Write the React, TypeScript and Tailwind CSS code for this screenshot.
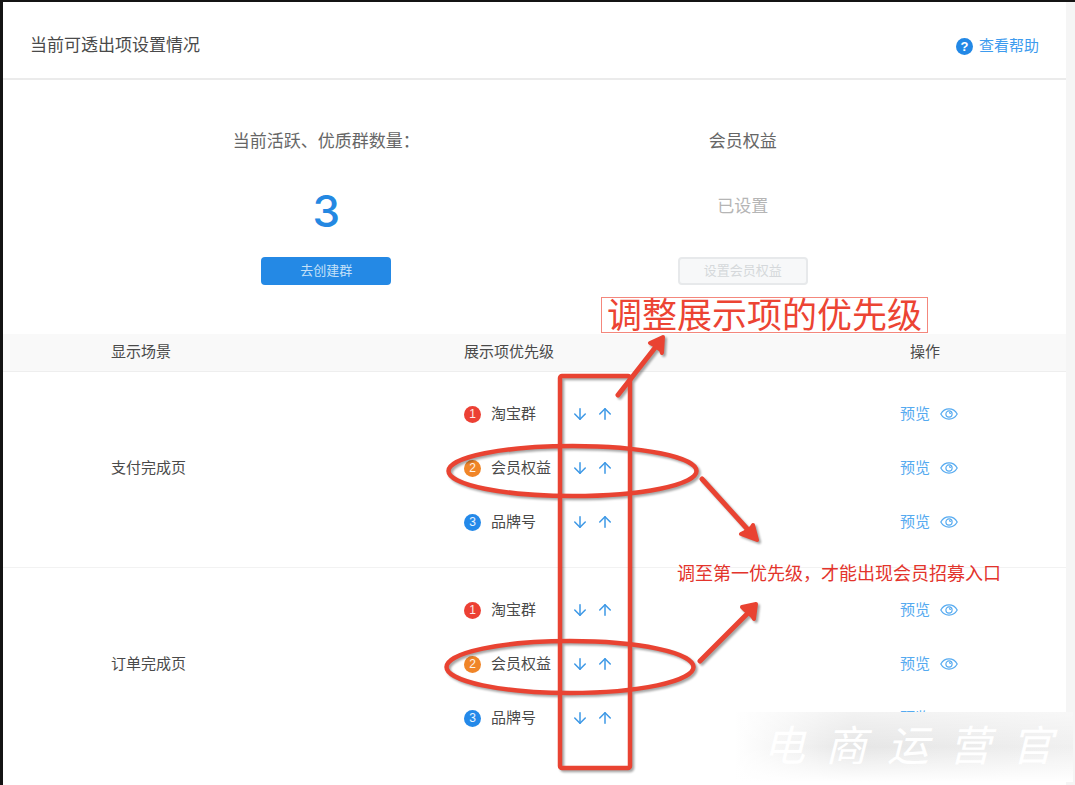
import { ArrowDown, ArrowUp } from 'lucide-react'

const scenes = ['支付完成页', '订单完成页']

const items = [
  { rank: 1, name: '淘宝群', color: 'bg-[#ec4034]' },
  { rank: 2, name: '会员权益', color: 'bg-[#f08528]' },
  { rank: 3, name: '品牌号', color: 'bg-[#2489e9]' },
]

function EyeIcon() {
  return (
    <svg width="18" height="12" viewBox="0 0 18 12" fill="none" stroke="currentColor" strokeWidth="1.2">
      <path d="M.8 6C2.6 2.7 5.5.9 9 .9S15.4 2.7 17.2 6C15.4 9.3 12.5 11.1 9 11.1S2.6 9.3.8 6Z" />
      <circle cx="9" cy="6" r="3.1" />
      <path d="M9 4.6A1.4 1.4 0 0 1 10.4 6" />
    </svg>
  )
}

function PriorityList({ scene }: { scene: string }) {
  return (
    <ul>
      {items.map((item) => (
        <li key={item.rank} className="flex h-[54px] items-center">
          <span className={`mr-[10px] flex size-[17px] items-center justify-center rounded-full text-[12px] leading-none text-white/90 ${item.color}`}>
            {item.rank}
          </span>
          <span className="w-[80px]">{item.name}</span>
          <span className="flex gap-[7px] text-[#3d98e6]">
            <button type="button" aria-label={`${scene} ${item.name} 下移`} className="cursor-pointer">
              <ArrowDown size={18} strokeWidth={2} />
            </button>
            <button type="button" aria-label={`${scene} ${item.name} 上移`} className="cursor-pointer">
              <ArrowUp size={18} strokeWidth={2} />
            </button>
          </span>
        </li>
      ))}
    </ul>
  )
}

function PreviewList() {
  return (
    <ul className="pl-2">
      {items.map((item) => (
        <li key={item.rank} className="flex h-[54px] items-center justify-center">
          <a href="#preview" className="flex items-center gap-[10px] text-[#55aaf0]">
            预览 <EyeIcon />
          </a>
        </li>
      ))}
    </ul>
  )
}

// hand-drawn style marks that sit on top of the table
function Marks() {
  return (
    <svg
      className="pointer-events-none absolute top-0 left-0 drop-shadow-[2px_2px_1px_rgba(0,0,0,0.35)]"
      width="1066"
      height="783"
      viewBox="3 2 1066 783"
      fill="none"
      stroke="#e94332"
      strokeWidth="4.5"
      strokeLinecap="round"
      strokeLinejoin="round"
    >
      <rect x="560" y="376" width="70" height="392" rx="2" />
      <ellipse cx="572.5" cy="471" rx="124" ry="25" />
      <ellipse cx="570" cy="667" rx="123.5" ry="26" />
      <path d="M618 395 658 344M702 479 750 532M700 661 749 612" strokeWidth="5" />
      <g fill="#e94332" strokeWidth="4">
        <path d="M663 337 650 343 654 345 661 350 662 353Z" />
        <path d="M757 540 741 534 745 532 751 528 753 525Z" />
        <path d="M756 604 742 607 745 610 752 616 754 619Z" />
      </g>
    </svg>
  )
}

function Watermark() {
  return (
    <div className="absolute top-[710px] -right-[7px] h-[70px] w-[338px] overflow-hidden bg-white">
      <div className="absolute inset-0 bg-linear-to-r from-white via-[#e6e6e6] via-35% to-[#f0f0f0]" />
      <div className="absolute inset-0 bg-linear-to-b from-white/50 via-transparent to-white" />
      <div className="relative flex h-full items-center justify-end gap-[20px] pr-[20px] text-[42px] leading-none text-white italic">
        {['电', '商', '运', '营', '官'].map((c) => (
          <span key={c}>{c}</span>
        ))}
      </div>
    </div>
  )
}

export default function App() {
  return (
    <div className="min-h-screen border-t-2 border-l-[3px] border-[#141414] bg-[#f5f5f5] pr-[9px] font-['Liberation_Sans','Noto_Sans_CJK_SC',sans-serif] text-[15px] text-[#4a4a4a]">
      <main className="relative min-h-[783px] bg-white">
        <header className="flex h-[78px] items-center justify-between border-b-2 border-[#ebebeb] pt-[12px] pr-[27px] pl-[27px]">
          <h1 className="text-[17px]">当前可透出项设置情况</h1>
          <a href="#help" className="flex items-center gap-[6px] text-[#3d9bee]">
            <span className="flex size-[17px] items-center justify-center rounded-full bg-[#2288e6] text-[13px] leading-none font-bold text-white">?</span>
            查看帮助
          </a>
        </header>

        <section className="grid h-[254px] grid-cols-2 px-[115px] pt-[49px] text-center">
          <div className="flex flex-col items-center">
            <h2 className="text-[17px] leading-[26px] text-[#666]">当前活跃、优质群数量：</h2>
            <p className="mt-[30px] h-[72px] font-['Inter',sans-serif] text-[44px] leading-[52px] font-medium text-[#2488e2]">3</p>
            <button type="button" className="h-[28px] w-[130px] cursor-pointer rounded bg-[#2489e5] text-[13px] text-[#c3e0f8]">
              去创建群
            </button>
          </div>
          <div className="flex flex-col items-center">
            <h2 className="text-[17px] leading-[26px] text-[#666]">会员权益</h2>
            <p className="mt-[30px] h-[72px] pt-[9px] text-[17px] leading-[26px] text-[#b5b5b5]">已设置</p>
            <button type="button" disabled className="h-[28px] w-[130px] rounded border-2 border-[#e7e9eb] bg-[#f7f8f9] text-[13px] text-[#d5d8db]">
              设置会员权益
            </button>
          </div>
        </section>

        <table className="w-full table-fixed text-left">
          <thead>
            <tr className="h-[37px] border-b border-[#eee] bg-[#f9f9f9]">
              <th className="w-[461px] pl-[108px] font-normal">显示场景</th>
              <th className="font-normal">展示项优先级</th>
              <th className="w-[282px] text-center font-normal">操作</th>
            </tr>
          </thead>
          <tbody>
            {scenes.map((scene) => (
              <tr key={scene} className="h-[196px] border-b border-[#f2f2f2] last:border-0">
                <td className="pb-[2px] pl-[108px]">{scene}</td>
                <td className="pb-[2px]">
                  <PriorityList scene={scene} />
                </td>
                <td className="pb-[2px]">
                  <PreviewList />
                </td>
              </tr>
            ))}
          </tbody>
        </table>

        <Marks />
        <p className="absolute top-[295px] left-[598px] border border-[#f4877c] px-[5px] pt-[2px] text-[35px] leading-[32px] whitespace-nowrap text-[#ec4433]">
          调整展示项的优先级
        </p>
        <p className="absolute top-[559px] left-[674px] text-[18px] leading-[26px] whitespace-nowrap text-[#e3342c]">
          调至第一优先级，才能出现会员招募入口
        </p>
        <Watermark />
      </main>
    </div>
  )
}
